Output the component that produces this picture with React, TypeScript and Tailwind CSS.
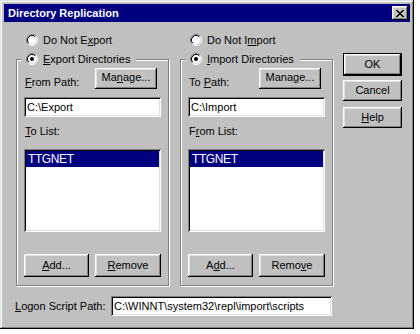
import React from "react";

const Radio = ({ checked }: { checked?: boolean }) => (
  <svg width="12" height="12" viewBox="0 0 12 12" className="shrink-0">
    <circle cx="6" cy="6" r="4.5" fill="#fff" />
    <path d="M2.11 9.89A5.5 5.5 0 0 1 9.89 2.11" stroke="#808080" fill="none" />
    <path d="M9.89 2.11A5.5 5.5 0 0 1 2.11 9.89" stroke="#fff" fill="none" />
    <path d="M2.82 9.18A4.5 4.5 0 0 1 9.18 2.82" stroke="#000" fill="none" />
    <path d="M9.18 2.82A4.5 4.5 0 0 1 2.82 9.18" stroke="#dfdfdf" fill="none" />
    {checked && <circle cx="6" cy="6" r="2" fill="#000" />}
  </svg>
);

const Btn = ({
  children,
  className = "",
}: {
  children: React.ReactNode;
  className?: string;
}) => (
  <div
    className={
      "flex items-center justify-center bg-[#c0c0c0] text-black leading-none shadow-[inset_-1px_-1px_#000,inset_1px_1px_#fff,inset_-2px_-2px_#808080,inset_2px_2px_#dfdfdf] " +
      className
    }
  >
    {children}
  </div>
);

const sunken =
  "bg-white shadow-[inset_1px_1px_#808080,inset_-1px_-1px_#fff,inset_2px_2px_#000,inset_-2px_-2px_#dfdfdf]";

const U = ({ children }: { children: React.ReactNode }) => (
  <span className="underline underline-offset-[1px]">{children}</span>
);

const CloseX = () => {
  const px: [number, number][] = [
    [0, 0], [1, 0], [6, 0], [7, 0],
    [1, 1], [2, 1], [5, 1], [6, 1],
    [2, 2], [3, 2], [4, 2], [5, 2],
    [3, 3], [4, 3],
    [2, 4], [3, 4], [4, 4], [5, 4],
    [1, 5], [2, 5], [5, 5], [6, 5],
    [0, 6], [1, 6], [6, 6], [7, 6],
  ];
  return (
    <svg width="8" height="7" viewBox="0 0 8 7" shapeRendering="crispEdges">
      {px.map(([x, y]) => (
        <rect key={`${x}-${y}`} x={x} y={y} width="1" height="1" fill="#000" />
      ))}
    </svg>
  );
};

const Group = ({
  legend,
  pathLabel,
  manage,
  pathValue,
  listLabel,
  add,
  remove,
}: {
  legend: React.ReactNode;
  pathLabel: React.ReactNode;
  manage: React.ReactNode;
  pathValue: string;
  listLabel: React.ReactNode;
  add: React.ReactNode;
  remove: React.ReactNode;
}) => (
  <div className="flex flex-col w-[153px] border border-[#808080] shadow-[1px_1px_0_#fff,inset_1px_1px_0_#fff] px-[7px] pb-[8px]">
    <div className="-mt-[9px] -ml-[2px] h-[16px] self-start flex items-center bg-[#c0c0c0] pl-[4px] pr-[6px]">
      <Radio checked />
      <span className="ml-[5px] leading-[13px]">{legend}</span>
    </div>
    <div className="mt-[1px] h-[21px] flex items-end justify-between">
      <span className="ml-[1px] leading-[13px]">{pathLabel}</span>
      <Btn className="w-[62px] h-[21px] mr-[4px] pb-[2px]">{manage}</Btn>
    </div>
    <div className={"mt-[8px] h-[20px] flex items-center pl-[3px] " + sunken}>
      <span className="leading-none">{pathValue}</span>
    </div>
    <div className="mt-[8px] ml-[1px] leading-[13px]">{listLabel}</div>
    <div className={"mt-[11px] h-[83px] p-[2px] " + sunken}>
      <div className="h-[16px] bg-[#000080] text-white text-[12px] tracking-[-0.4px] pl-[2px] flex items-center">
        TTGNET
      </div>
    </div>
    <div className="mt-[22px] flex justify-between">
      <Btn className="w-[65px] h-[23px]">{add}</Btn>
      <Btn className="w-[66px] h-[23px]">{remove}</Btn>
    </div>
  </div>
);

export default function App() {
  return (
    <div className="w-[420px] h-[334px] bg-white font-['Liberation_Sans',Arial,sans-serif] text-[11px] text-black">
      <div className="w-[414px] h-[329px] bg-[#c0c0c0] p-[4px] flex flex-col shadow-[inset_-1px_-1px_#000,inset_1px_1px_#dfdfdf,inset_-2px_-2px_#808080,inset_2px_2px_#fff]">
        <div className="h-[18px] bg-[#000080] flex items-center pl-[4px] pr-[2px]">
          <span className="text-white font-bold leading-none">Directory Replication</span>
          <div className="ml-auto w-[16px] h-[14px] flex items-center justify-center bg-[#c0c0c0] shadow-[inset_-1px_-1px_#000,inset_1px_1px_#fff,inset_-2px_-2px_#808080,inset_2px_2px_#dfdfdf]">
            <CloseX />
          </div>
        </div>
        <div className="flex">
          <div className="ml-[12px] flex flex-col">
            <div className="mt-[10px] h-[16px] flex items-center pl-[10px]">
              <Radio />
              <span className="ml-[5px]">
                Do Not E<U>x</U>port
              </span>
            </div>
            <div className="mt-[11px]">
              <Group
                legend={<><U>E</U>xport Directories</>}
                pathLabel={<><U>F</U>rom Path:</>}
                manage={<>Ma<U>n</U>age...</>}
                pathValue="C:\Export"
                listLabel={<><U>T</U>o List:</>}
                add={<><U>A</U>dd...</>}
                remove={<><U>R</U>emove</>}
              />
            </div>
          </div>
          <div className="ml-[11px] flex flex-col">
            <div className="mt-[10px] h-[16px] flex items-center pl-[10px]">
              <Radio />
              <span className="ml-[5px]">
                Do Not I<U>m</U>port
              </span>
            </div>
            <div className="mt-[11px]">
              <Group
                legend={<><U>I</U>mport Directories</>}
                pathLabel={<>To <U>P</U>ath:</>}
                manage={<>Mana<U>g</U>e...</>}
                pathValue="C:\Import"
                listLabel={<>F<U>r</U>om List:</>}
                add={<>A<U>d</U>d...</>}
                remove={<>Remo<U>v</U>e</>}
              />
            </div>
          </div>
          <div className="ml-[10px] mt-[31px] flex flex-col">
            <Btn className="w-[59px] h-[23px] border border-black">OK</Btn>
            <Btn className="mt-[4px] w-[59px] h-[21px]">Cancel</Btn>
            <Btn className="mt-[6px] w-[59px] h-[21px]">
              <U>H</U>elp
            </Btn>
          </div>
        </div>
        <div className="mt-[10px] flex items-center pl-[11px]">
          <span className="w-[96px]">
            <U>L</U>ogon Script Path:
          </span>
          <div className={"w-[221px] h-[20px] flex items-center pl-[3px] " + sunken}>
            <span className="leading-none">C:\WINNT\system32\repl\import\scripts</span>
          </div>
        </div>
      </div>
    </div>
  );
}
